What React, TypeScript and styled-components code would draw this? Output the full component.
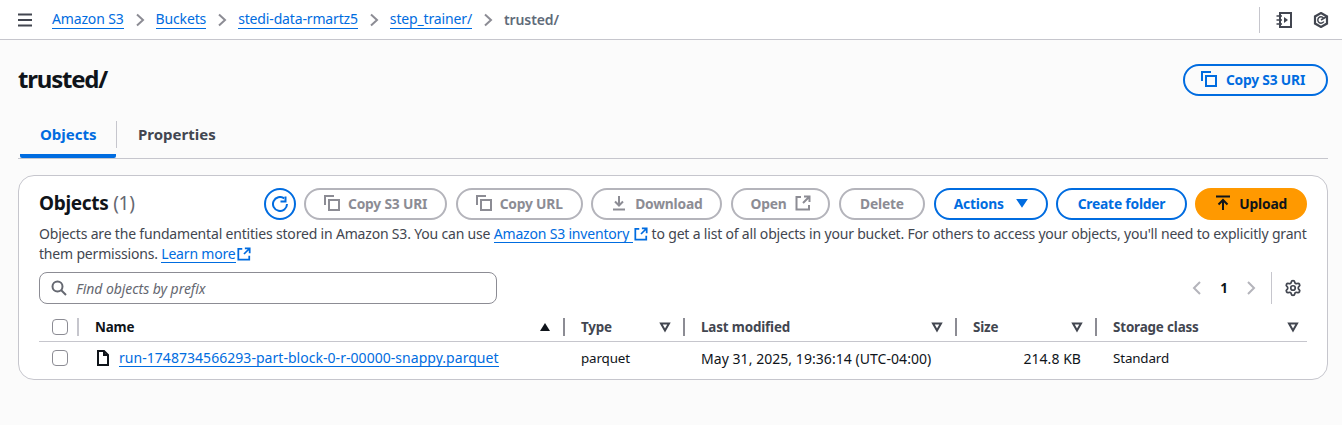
import styled, {createGlobalStyle} from "styled-components";
import {Settings} from "lucide-react";

const GlobalStyle = createGlobalStyle`
    html, body {
        margin: 0;
        padding: 0;
        background: #fbfbfb;
    }
    body {
        font-family: "Noto Sans", "Open Sans", sans-serif;
        font-size: 14px;
        color: #0f141a;
    }
    * {
        box-sizing: border-box;
    }
`

const BLUE = "#006ce0";
const MUTED = "#8c8c94";
const GREY_BORDER = "#b4b4bb";
const LINE = "#c6c6cd";
const DARK = "#424650";

const TopBar = styled.header`
    height: 40px;
    background: #fff;
    border-bottom: 1px solid ${LINE};
    display: flex;
    align-items: center;
    padding-left: 17px;
    padding-right: 13px;
`

const Crumbs = styled.nav`
    display: flex;
    align-items: center;
    margin-left: 19px;
    flex: 1;
`

const CrumbLink = styled.a`
    color: ${BLUE};
    font-size: 14px;
    letter-spacing: -0.15px;
    line-height: 18px;
    border-bottom: 1px solid ${BLUE};
`

const CrumbCurrent = styled.span`
    color: #5f6b7a;
    font-size: 14px;
    font-weight: 600;
    letter-spacing: -0.1px;
`

const CrumbSep = styled.svg`
    width: 16px;
    height: 16px;
    margin: 0 8px;
    fill: none;
    stroke: ${MUTED};
    stroke-width: 2;
`

const TopIcons = styled.div`
    display: flex;
    align-items: center;
    gap: 21px;
    height: 26px;
    padding-left: 16px;
    border-left: 1px solid ${LINE};
    color: ${DARK};
`

const Main = styled.main`
    padding: 0 14px 0 18px;
`

const PageHead = styled.div`
    display: flex;
    justify-content: space-between;
    align-items: center;
    height: 80px;
`

const Title = styled.h1`
    margin: 0 0 2px;
    font-size: 24px;
    line-height: 30px;
    font-weight: 700;
    letter-spacing: -1.2px;
`

const Tabs = styled.div`
    display: flex;
    align-items: flex-start;
    height: 39px;
    border-bottom: 1px solid ${LINE};
`

const Tab = styled.div<{ $active?: boolean }>`
    height: 38px;
    width: ${p => (p.$active ? "96px" : "auto")};
    margin-left: ${p => (p.$active ? "2px" : "0")};
    padding-left: ${p => (p.$active ? "20px" : "21px")};
    font-size: 15px;
    font-weight: 700;
    line-height: 29px;
    color: ${p => (p.$active ? BLUE : DARK)};
    border-bottom: 4px solid ${p => (p.$active ? BLUE : "transparent")};
    border-radius: 0 0 2px 2px;
`

const TabDivider = styled.span`
    width: 1px;
    height: 27px;
    margin-top: 1px;
    background: ${LINE};
`

const Card = styled.section`
    margin-top: 16px;
    background: #fff;
    border: 1px solid ${LINE};
    border-radius: 16px;
    height: 205px;
    padding: 0 20px;
`

const CardHead = styled.div`
    display: flex;
    align-items: center;
    justify-content: space-between;
    height: 32px;
    margin-top: 12px;
`

const CardTitle = styled.h2`
    margin: 0 0 2px;
    font-size: 19px;
    line-height: 24px;
    font-weight: 700;
    letter-spacing: -0.3px;
`

const Count = styled.span`
    color: #656871;
    font-weight: 400;
`

const Actions = styled.div`
    display: flex;
    align-items: center;
    gap: 8.5px;
`

const Pill = styled.button<{ $variant?: "normal" | "disabled" | "primary"; $pad?: number; $gap?: number }>`
    display: inline-flex;
    align-items: center;
    justify-content: center;
    gap: ${p => p.$gap ?? 8}px;
    height: 32px;
    padding: 0 ${p => p.$pad ?? 18}px 2px;
    border-radius: 16px;
    font-family: inherit;
    font-size: 13.8px;
    font-weight: 700;
    letter-spacing: -0.2px;
    white-space: nowrap;
    background: ${p => (p.$variant === "primary" ? "#ff9900" : "#fff")};
    color: ${p => (p.$variant === "primary" ? "#0f141a" : p.$variant === "disabled" ? MUTED : BLUE)};
    border: 2px solid ${p => (p.$variant === "primary" ? "#ff9900" : p.$variant === "disabled" ? GREY_BORDER : BLUE)};
`

const HeadPill = styled(Pill)`
    width: 145px;
    padding: 0 5px 2px 0;
    gap: 9px;
    background: transparent;
`

const RoundButton = styled.button`
    width: 32px;
    height: 32px;
    padding: 0;
    border-radius: 50%;
    border: 2px solid ${BLUE};
    background: #fff;
    color: ${BLUE};
    display: inline-flex;
    align-items: center;
    justify-content: center;
`

const Description = styled.p`
    margin: 4px 0 0;
    font-size: 14px;
    line-height: 20px;
    letter-spacing: -0.185px;
    white-space: nowrap;
    color: ${DARK};
`

const InlineLink = styled.a`
    color: ${BLUE};
    border-bottom: 1px solid ${BLUE};
    display: inline-block;
    line-height: 17px;
    white-space: pre;
`

const External = styled.svg`
    width: 14px;
    height: 14px;
    margin: 0 4px 0 1px;
    vertical-align: -2px;
    fill: none;
    stroke: ${BLUE};
    stroke-width: 2;
`

const FilterRow = styled.div`
    display: flex;
    align-items: center;
    justify-content: space-between;
    margin-top: 8px;
    height: 32px;
`

const Search = styled.div`
    width: 458px;
    height: 32px;
    border: 1px solid ${MUTED};
    border-radius: 8px;
    display: flex;
    align-items: center;
    gap: 9px;
    padding-left: 11px;
    background: #fff;
    font-style: italic;
    font-size: 14px;
    letter-spacing: -0.05px;
    color: #656871;
`

const Pager = styled.div`
    display: flex;
    align-items: center;
    height: 32px;
    padding-right: 5px;
`

const PageNumber = styled.span`
    width: 38px;
    text-align: center;
    font-size: 13.4px;
    font-weight: 700;
`

const PagerDivider = styled.span`
    width: 1px;
    height: 32px;
    background: ${LINE};
    margin: 0 12px 0 12px;
`

const Table = styled.div`
    margin-top: 8px;
`

const Row = styled.div<{ $head?: boolean }>`
    display: grid;
    grid-template-columns: 526px 120px 272px 140px 1fr;
    align-items: center;
    height: ${p => (p.$head ? "30px" : "32px")};
    border-bottom: ${p => (p.$head ? `1px solid ${LINE}` : "none")};
    font-size: 13.4px;
    letter-spacing: -0.15px;
    color: #0f141a;
`

const NameCell = styled.div`
    display: flex;
    align-items: center;
`

const Check = styled.span`
    width: 16px;
    height: 16px;
    margin-left: 13px;
    border: 1px solid ${MUTED};
    border-radius: 4px;
    background: #fff;
    flex: none;
`

const CheckDivider = styled.span`
    width: 2px;
    height: 18px;
    background: ${LINE};
    margin: 0 16px 0 9px;
`

const HeadCell = styled.div<{ $divider?: boolean }>`
    display: flex;
    align-items: center;
    justify-content: space-between;
    height: 18px;
    font-weight: 700;
    color: ${DARK};
    padding: 0 ${p => (p.$divider ? "12px" : "8px")} 0 16px;
    border-right: ${p => (p.$divider ? `2px solid ${MUTED}` : "none")};
`

const NameHead = styled(HeadCell)`
    flex: 1;
    padding: 0 12px 0 0;
    color: #0f141a;
`

const BodyCell = styled.div<{ $right?: boolean; $wide?: boolean }>`
    padding: 0 ${p => (p.$right ? "16px" : "0")} 0 ${p => (p.$right ? "0" : "16px")};
    text-align: ${p => (p.$right ? "right" : "left")};
    font-size: ${p => (p.$wide ? "14px" : "13.4px")};
    letter-spacing: ${p => (p.$wide ? "0.05px" : "-0.15px")};
    white-space: nowrap;
`

const FileLink = styled.a`
    color: ${BLUE};
    font-size: 14px;
    letter-spacing: 0.04px;
    border-bottom: 1px solid ${BLUE};
    line-height: 17px;
    margin-left: 8px;
`

const FileIcon = styled.svg`
    width: 16px;
    height: 16px;
    margin-left: 27px;
    fill: none;
    stroke: currentColor;
    stroke-width: 2;
    flex: none;
`

const Icon = styled.svg<{ $size?: number; $tone?: string; $fill?: string }>`
    width: ${p => p.$size ?? 16}px;
    height: ${p => p.$size ?? 16}px;
    fill: ${p => p.$fill ?? "none"};
    stroke: ${p => p.$tone ?? "currentColor"};
    stroke-width: 2;
    flex: none;
`

const CopyIcon = () => (
    <Icon viewBox="0 0 16 16">
        <path d="M1 10V1h9"/>
        <path d="M5 5h10v10H5z"/>
    </Icon>
)

const SortIcon = () => (
    <Icon $size={12} $tone={DARK} viewBox="0 0 12 12">
        <path d="M2 2.500h8L6 9.500z"/>
    </Icon>
)

const Chevron = () => (
    <CrumbSep viewBox="0 0 16 16">
        <path d="M5 2.500l6 5.500-6 5.500"/>
    </CrumbSep>
)

const ExternalIcon = () => (
    <External viewBox="0 0 16 16">
        <path d="M6 2H1.500v12.500H14V10"/>
        <path d="M9 1.500h5.500V7M14 2L8 8"/>
    </External>
)

function App() {
    return (
        <>
            <GlobalStyle/>
            <TopBar>
                <Icon $tone={DARK} viewBox="0 0 16 16">
                    <path d="M1 2.500h14M1 8h14M1 13.500h14"/>
                </Icon>
                <Crumbs>
                    <CrumbLink>Amazon S3</CrumbLink>
                    <Chevron/>
                    <CrumbLink>Buckets</CrumbLink>
                    <Chevron/>
                    <CrumbLink>stedi-data-rmartz5</CrumbLink>
                    <Chevron/>
                    <CrumbLink>step_trainer/</CrumbLink>
                    <Chevron/>
                    <CrumbCurrent>trusted/</CrumbCurrent>
                </Crumbs>
                <TopIcons>
                    <Icon viewBox="0 0 16 16">
                        <path d="M4 1h11v14H4z"/>
                        <path d="M0.500 4H6M0.500 8H6M0.500 12H6" strokeWidth="1.500"/>
                        <path d="M8 5l4 3-4 3z" fill="currentColor" stroke="none"/>
                    </Icon>
                    <Icon viewBox="0 0 16 16">
                        <path d="M8 1l6 3.500v7L8 15l-6-3.500v-7z" strokeWidth="2.200"/>
                        <path d="M10.800 9.500A3.200 3.200 0 1 1 10.500 6" strokeWidth="1.500"/>
                        <path d="M8 8l5-3" strokeWidth="1.500"/>
                    </Icon>
                </TopIcons>
            </TopBar>
            <Main>
                <PageHead>
                    <Title>trusted/</Title>
                    <HeadPill>
                        <CopyIcon/>
                        Copy S3 URI
                    </HeadPill>
                </PageHead>
                <Tabs>
                    <Tab $active>Objects</Tab>
                    <TabDivider/>
                    <Tab>Properties</Tab>
                </Tabs>
                <Card>
                    <CardHead>
                        <CardTitle>Objects <Count>(1)</Count></CardTitle>
                        <Actions>
                            <RoundButton>
                                <Icon viewBox="0 0 16 16">
                                    <path d="M15 8a7 7 0 1 1-2.800-5.600"/>
                                    <path d="M13.500 0.500v5H8.500"/>
                                </Icon>
                            </RoundButton>
                            <Pill $variant="disabled"><CopyIcon/>Copy S3 URI</Pill>
                            <Pill $variant="disabled"><CopyIcon/>Copy URL</Pill>
                            <Pill $variant="disabled">
                                <Icon viewBox="0 0 16 16">
                                    <path d="M8 1v9M4 6.500L8 10.500l4-4M2 14.500h12"/>
                                </Icon>
                                Download
                            </Pill>
                            <Pill $variant="disabled" $pad={17.5}>
                                Open
                                <Icon viewBox="0 0 16 16">
                                    <path d="M6 2H1.500v12.500H14V10"/>
                                    <path d="M9 1.500h5.500V7M14 2L8 8"/>
                                </Icon>
                            </Pill>
                            <Pill $variant="disabled" $pad={19.5}>Delete</Pill>
                            <Pill $gap={12}>
                                Actions
                                <Icon $size={12} $fill={BLUE} viewBox="0 0 12 12">
                                    <path d="M2 3h8L6 9z"/>
                                </Icon>
                            </Pill>
                            <Pill $pad={19.5}>Create folder</Pill>
                            <Pill $variant="primary">
                                <Icon viewBox="0 0 16 16">
                                    <path d="M1 1.500h14M8 15V5M3.500 9.500L8 5l4.500 4.500"/>
                                </Icon>
                                Upload
                            </Pill>
                        </Actions>
                    </CardHead>
                    <Description>
                        Objects are the fundamental entities stored in Amazon S3. You can use{" "}
                        <InlineLink>Amazon S3 inventory </InlineLink>
                        <ExternalIcon/>
                        to get a list of all objects in your bucket. For others to access your objects, you'll need to explicitly grant
                        <br/>
                        them permissions.{" "}
                        <InlineLink>Learn more</InlineLink>
                        <ExternalIcon/>
                    </Description>
                    <FilterRow>
                        <Search>
                            <Icon $tone="#656871" viewBox="0 0 16 16">
                                <circle cx="6.500" cy="6.500" r="5"/>
                                <path d="M10 10l5 5"/>
                            </Icon>
                            Find objects by prefix
                        </Search>
                        <Pager>
                            <Icon $tone={GREY_BORDER} viewBox="0 0 16 16">
                                <path d="M11 2L5 8l6 6"/>
                            </Icon>
                            <PageNumber>1</PageNumber>
                            <Icon $tone={GREY_BORDER} viewBox="0 0 16 16">
                                <path d="M5 2l6 6-6 6"/>
                            </Icon>
                            <PagerDivider/>
                            <Settings size={18} color={DARK} strokeWidth={2.3}/>
                        </Pager>
                    </FilterRow>
                    <Table>
                        <Row $head>
                            <NameCell>
                                <Check/>
                                <CheckDivider/>
                                <NameHead $divider>
                                    Name
                                    <Icon $size={12} $tone="none" $fill="#0f141a" viewBox="0 0 12 12">
                                        <path d="M1 10h10L6 2z"/>
                                    </Icon>
                                </NameHead>
                            </NameCell>
                            <HeadCell $divider>Type<SortIcon/></HeadCell>
                            <HeadCell $divider>Last modified<SortIcon/></HeadCell>
                            <HeadCell $divider>Size<SortIcon/></HeadCell>
                            <HeadCell>Storage class<SortIcon/></HeadCell>
                        </Row>
                        <Row>
                            <NameCell>
                                <Check/>
                                <FileIcon viewBox="0 0 16 16">
                                    <path d="M3 1h6l4 4v10H3zM9 1v4h4"/>
                                </FileIcon>
                                <FileLink>run-1748734566293-part-block-0-r-00000-snappy.parquet</FileLink>
                            </NameCell>
                            <BodyCell>parquet</BodyCell>
                            <BodyCell $wide>May 31, 2025, 19:36:14 (UTC-04:00)</BodyCell>
                            <BodyCell $right $wide>214.8 KB</BodyCell>
                            <BodyCell>Standard</BodyCell>
                        </Row>
                    </Table>
                </Card>
            </Main>
        </>
    )
}

export default App;
